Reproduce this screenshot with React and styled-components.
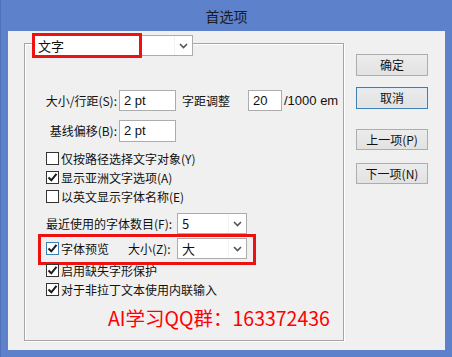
import React from "react";
import styled, { createGlobalStyle } from "styled-components";

const GlobalStyle = createGlobalStyle`
  html, body {
    margin: 0;
    padding: 0;
    background: #5d81cb;
  }
  * {
    box-sizing: border-box;
  }
`;

const FONT = `"Noto Sans CJK SC", "Noto Sans", sans-serif`;
const LATIN = `"Liberation Sans", "Noto Sans CJK SC", sans-serif`;

const Window = styled.div`
  width: 452px;
  height: 357px;
  background: #5d81cb;
  border-left: 1px solid #4f72b8;
  padding: 0 7px 7px 7px;
  display: flex;
  flex-direction: column;
  font-family: ${FONT};
  font-size: 12px;
  color: #111;
`;

const TitleBar = styled.div`
  height: 31px;
  flex-shrink: 0;
  display: flex;
  align-items: center;
  justify-content: center;
  font-size: 14px;
  line-height: 16px;
  color: #1c1c1c;
  padding-top: 1px;
`;

const Client = styled.div`
  flex: 1;
  min-height: 0;
  background: #f0f0f0;
  display: flex;
  padding: 4px 17px 9px 16px;
`;

const LeftCol = styled.div`
  width: 320px;
  display: flex;
  flex-direction: column;
`;

const RightCol = styled.div`
  margin-left: 12px;
  padding-top: 19px;
  display: flex;
  flex-direction: column;
`;

const SelectBox = styled.div`
  position: relative;
  z-index: 1;
  width: ${p => p.$w}px;
  height: ${p => p.$h ?? 21}px;
  margin-left: ${p => p.$ml ?? 0}px;
  background: #fff;
  border: 1px solid #acacac;
  display: flex;
  align-items: center;
  flex-shrink: 0;
`;

const SelectText = styled.span`
  flex: 1;
  padding-left: 4px;
  line-height: 14px;
  font-size: ${p => p.$fs ?? 12}px;
`;

const ArrowCell = styled.span`
  width: 18px;
  height: 100%;
  border-left: 1px solid #f2f2f2;
  display: flex;
  align-items: center;
  justify-content: center;
`;

const Mark = styled.div`
  position: absolute;
  left: -2px;
  top: -3px;
  width: 110px;
  height: 25px;
  border: 3px solid #ee1111;
`;

const Group = styled.div`
  flex: 1;
  min-height: 0;
  margin-top: -13px;
  border: 1px solid #a5a5a5;
  box-shadow: inset 1px 1px 0 #fff, 1px 1px 0 #fff;
  padding: 46px 0 0 14px;
  display: flex;
  flex-direction: column;
`;

const Row = styled.div`
  display: flex;
  align-items: center;
  flex-shrink: 0;
  height: ${p => p.$h ?? 21}px;
  margin-top: ${p => p.$mt ?? 0}px;
  padding-left: ${p => p.$pl ?? 0}px;
  line-height: 14px;
  white-space: nowrap;
`;

const Label = styled.span`
  width: ${p => p.$w}px;
  text-align: ${p => p.$align ?? "left"};
  margin-left: ${p => p.$ml ?? 0}px;
  margin-right: ${p => p.$mr ?? 0}px;
  flex-shrink: 0;
`;

const Input = styled.div`
  width: ${p => p.$w}px;
  height: ${p => p.$h ?? 21}px;
  margin-left: ${p => p.$ml ?? 0}px;
  background: #fff;
  border: 1px solid #acacac;
  display: flex;
  align-items: center;
  padding-left: 4px;
  font-size: 13px;
  font-family: ${LATIN};
  line-height: 14px;
  flex-shrink: 0;
`;

const Unit = styled.span`
  margin-left: 2px;
  font-size: 13px;
  font-family: ${LATIN};
`;

const Box = styled.span`
  width: 13px;
  height: 13px;
  border: 1px solid ${p => (p.$focus ? "#3c7fb1" : "#333")};
  background: #fff;
  display: flex;
  align-items: center;
  justify-content: center;
  margin-right: 2px;
  flex-shrink: 0;
`;

const Highlight = styled.div`
  display: flex;
  flex-shrink: 0;
  width: fit-content;
  margin-left: -1px;
  border: 3px solid #ee1111;
  padding: 1px 6px 3px 5px;
`;

const Watermark = styled.div`
  margin: 5px 0 0 69px;
  height: 28px;
  flex-shrink: 0;
  display: flex;
  align-items: center;
  color: #ff0000;
  font-size: 19.5px;
  line-height: 24px;
  font-family: "Noto Sans CJK SC", sans-serif;
  white-space: nowrap;
`;

const Button = styled.button`
  width: 72px;
  height: ${p => p.$h ?? 22}px;
  margin-top: ${p => p.$mt ?? 0}px;
  padding: 0;
  font-family: ${FONT};
  font-size: 12px;
  line-height: 14px;
  color: #111;
  background: linear-gradient(#ececec, #e2e2e2);
  border: 1px solid ${p => (p.$primary ? "#3c7fb1" : "#adadad")};
  box-shadow: ${p => (p.$primary ? "inset 0 0 0 1px #dcecfc" : "none")};
`;

const Chevron = () => (
  <svg width="9" height="6" viewBox="0 0 9 6">
    <polyline points="1,1 4.5,4.5 8,1" fill="none" stroke="#555" strokeWidth="1.6" />
  </svg>
);

const Check = ({ checked, focus }) => (
  <Box $focus={focus}>
    {checked && (
      <svg width="11" height="11" viewBox="0 0 11 11">
        <path d="M1.5 5.5 L4.3 8.3 L9.5 1.8" fill="none" stroke="#1a1a1a" strokeWidth="2" />
      </svg>
    )}
  </Box>
);

const Select = ({ value, w, ml, fs }) => (
  <SelectBox $w={w} $ml={ml}>
    <SelectText $fs={fs}>{value}</SelectText>
    <ArrowCell>
      <Chevron />
    </ArrowCell>
  </SelectBox>
);

const CheckRow = ({ checked, children }) => (
  <Row $h={19} $pl={7}>
    <Check checked={checked} />
    <span>{children}</span>
  </Row>
);

export default function App() {
  return (
    <>
      <GlobalStyle />
      <Window>
        <TitleBar>首选项</TitleBar>
        <Client>
          <LeftCol>
            <SelectBox $w={160} $ml={9}>
              <SelectText $fs={13}>文字</SelectText>
              <ArrowCell>
                <Chevron />
              </ArrowCell>
              <Mark />
            </SelectBox>
            <Group>
              <Row>
                <Label $w={78} $align="right" $mr={2}>大小/行距(S):</Label>
                <Input $w={57}>2 pt</Input>
                <Label $w={48} $ml={6}>字距调整</Label>
                <Input $w={34} $ml={18}>20</Input>
                <Unit>/1000 em</Unit>
              </Row>
              <Row $h={22} $mt={9}>
                <Label $w={78} $align="right" $mr={2}>基线偏移(B):</Label>
                <Input $w={57} $h={22}>2 pt</Input>
              </Row>
              <Row $h={0} $mt={7} />
              <CheckRow>仅按路径选择文字对象(Y)</CheckRow>
              <CheckRow checked>显示亚洲文字选项(A)</CheckRow>
              <CheckRow>以英文显示字体名称(E)</CheckRow>
              <Row $mt={7} $pl={7}>
                <Label $w={131}>最近使用的字体数目(F):</Label>
                <Select value="5" w={70} fs={13} />
              </Row>
              <Highlight>
                <Row>
                  <Check checked focus />
                  <Label $w={67}>字体预览</Label>
                  <Label $w={49}>大小(Z):</Label>
                  <Select value="大" w={70} fs={13} />
                </Row>
              </Highlight>
              <Row $h={0} $mt={-4} />
              <CheckRow checked>启用缺失字形保护</CheckRow>
              <CheckRow checked>对于非拉丁文本使用内联输入</CheckRow>
              <Watermark>AI学习QQ群：163372436</Watermark>
            </Group>
          </LeftCol>
          <RightCol>
            <Button>确定</Button>
            <Button $primary $mt={11}>取消</Button>
            <Button $mt={20} $h={21}>上一项(P)</Button>
            <Button $mt={13} $h={21}>下一项(N)</Button>
          </RightCol>
        </Client>
      </Window>
    </>
  );
}
